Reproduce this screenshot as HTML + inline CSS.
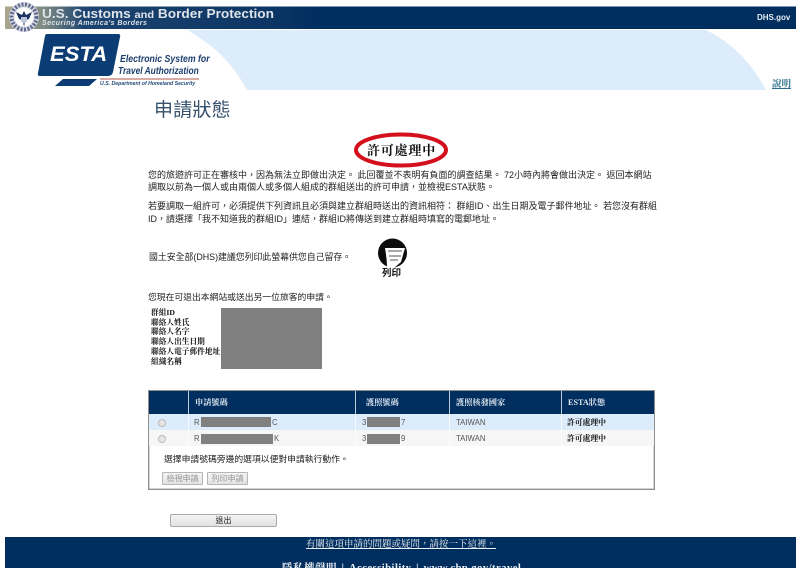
<!DOCTYPE html>
<html lang="zh-Hant"><head><meta charset="utf-8"><title>ESTA</title>
<style>
html,body{margin:0;padding:0;background:#fff;width:800px;height:568px;overflow:hidden}
body{position:relative;font-family:"Liberation Sans","Noto Sans CJK TC",sans-serif;color:#222}
div,a,span{position:absolute;white-space:nowrap}
svg{position:absolute;left:0;top:0}
.t{font-size:9px;line-height:12px;color:#222}
.b{font-family:"Liberation Serif","Noto Serif CJK SC",serif;font-weight:700;font-size:7.7px;line-height:9.7px;color:#111}
.h{font-family:"Liberation Serif","Noto Serif CJK SC",serif;font-weight:700;font-size:8.2px;color:#dfe8f0;top:398px;line-height:10px}
.c{font-size:7.8px;color:#555;line-height:10px}
.s{font-family:"Liberation Serif","Noto Serif CJK SC",serif;font-weight:700;font-size:7.8px;color:#111;left:567px;line-height:10px}
.g{background:#808080}
.btn{background:linear-gradient(#f4f4f4,#e2e2e2);border:1px solid #b5b5b5;border-radius:1px;font-size:8px;color:#999;text-align:center;box-sizing:border-box}
.r{width:6px;height:6px;border:1px solid #bbb;border-radius:50%;background:#e6e6e6;left:158px}
</style></head><body>
<svg width="800" height="568" viewBox="0 0 800 568">
<defs><linearGradient id="hd" x1="0" x2="1" y1="0" y2="0"><stop offset="0" stop-color="#a9a68e"/><stop offset=".05" stop-color="#7d8b83"/><stop offset=".1" stop-color="#1d4470"/><stop offset=".34" stop-color="#0b3564"/><stop offset=".4" stop-color="#002e5f"/><stop offset="1" stop-color="#002e5f"/></linearGradient></defs>
<path d="M187 30H706C734 44 752 64 766 90H247C232 62 212 44 187 30Z" fill="#dcecfb"/>
<rect x="5" y="6.500" width="791" height="22.500" fill="url(#hd)"/>
<circle cx="24" cy="17" r="15" fill="#d9d9e2"/>
<circle cx="24" cy="17" r="12.500" fill="none" stroke="#5f6a90" stroke-width="4" stroke-dasharray="2 1.500"/>
<circle cx="24" cy="17" r="9.500" fill="#fff"/>
<path d="M16 12L22 15L24 11L26 15L32 12L29 19L26 20L24 26L22 20L19 19Z" fill="#1d3160"/>
<path d="M21 17H27V21L24 24L21 21Z" fill="#b9c3d8"/>
<path d="M47 34H118Q121 34 120 37L113 72Q112 76 108 76H40Q37 76 38 73L45 36Q45.500 34 47 34Z" fill="#0b3c73"/>
<path d="M63 79H97L89 86H55Z" fill="#0b3c73"/>
<rect x="100" y="78.500" width="99" height="1" fill="#b0554d"/>
<ellipse cx="401" cy="150" rx="45" ry="15.500" fill="none" stroke="#d3101c" stroke-width="4"/>
<circle cx="392.500" cy="253" r="14.500" fill="#0c0c0c"/>
<path d="M385 248H405L401 262L394 268H387C387 261 386 254 385 248Z" fill="#fff"/>
<path d="M388 251H402M389 256H401M390 260H398" stroke="#555" stroke-width="1" fill="none"/>
</svg>

<div style="left:42px;top:6px;font-size:13px;font-weight:700;color:#dfe3ea;line-height:16px;transform-origin:0 0;transform:scaleX(1.05)">U.S. Customs <span style="position:static;font-size:10.500px">and</span> Border Protection</div>
<div style="left:42px;top:20px;font-size:7px;font-weight:700;font-style:italic;color:#dfe3ea;line-height:8px;letter-spacing:.45px">Securing America's Borders</div>
<div style="left:757px;top:13px;font-size:8px;font-weight:700;color:#e6ecf2;line-height:10px">DHS.gov</div>

<div style="left:50px;top:43px;font-size:21px;font-weight:700;font-style:italic;color:#fff;line-height:24px;transform-origin:0 0;transform:scaleX(1.05)">ESTA</div>
<div style="left:120px;top:53px;font-size:10.500px;font-style:italic;color:#1d3f6e;line-height:12px;font-weight:700;transform-origin:0 0;transform:scaleX(.83)">Electronic System for</div>
<div style="left:118px;top:65px;font-size:10.500px;font-style:italic;color:#1d3f6e;line-height:12px;font-weight:700;transform-origin:0 0;transform:scaleX(.8)">Travel Authorization</div>
<div style="left:100px;top:81px;font-size:5.200px;font-style:italic;font-weight:700;color:#264a78;line-height:7px">U.S. Department of Homeland Security</div>

<a style="left:772px;top:79px;font-size:9.500px;font-weight:700;color:#2b6f8c;text-decoration:underline;line-height:12px;font-family:'Liberation Serif','Noto Serif CJK SC',serif">說明</a>

<div style="left:154px;top:97px;font-size:19px;line-height:24px;color:#37516d;font-family:'Noto Sans CJK TC',sans-serif;letter-spacing:.2px">申請狀態</div>
<div style="left:367px;top:143px;font-size:13px;line-height:16px;font-weight:700;color:#111;font-family:'Liberation Serif','Noto Serif CJK SC',serif;letter-spacing:.8px">許可處理中</div>

<div class="t" style="left:148px;top:169px">您的旅遊許可正在審核中，因為無法立即做出決定。 此回覆並不表明有負面的調查結果。 72小時內將會做出決定。 返回本網站</div>
<div class="t" style="left:148px;top:181px">調取以前為一個人或由兩個人或多個人組成的群組送出的許可申請，並檢視ESTA狀態。</div>
<div class="t" style="left:148px;top:200px">若要調取一組許可，必須提供下列資訊且必須與建立群組時送出的資訊相符： 群組ID、出生日期及電子郵件地址。 若您沒有群組</div>
<div class="t" style="left:148px;top:213px">ID，請選擇「我不知道我的群組ID」連結，群組ID將傳送到建立群組時填寫的電郵地址。</div>
<div class="t" style="left:149px;top:251px;font-size:8.900px">國土安全部(DHS)建議您列印此螢幕供您自己留存。</div>
<div style="left:382px;top:268px;font-size:9.500px;font-weight:700;color:#111;line-height:12px">列印</div>
<div class="t" style="left:148px;top:291px;font-size:8.800px">您現在可退出本網站或送出另一位旅客的申請。</div>

<div class="b" style="left:151px;top:308px">群組ID<br>聯絡人姓氏<br>聯絡人名字<br>聯絡人出生日期<br>聯絡人電子郵件地址<br>組織名稱</div>
<div class="g" style="left:221px;top:308px;width:101px;height:61px"></div>

<div style="left:148px;top:390px;width:507px;height:100px;border:1px solid #8f8f8f;box-shadow:inset 0 0 0 .5px #aaa;box-sizing:border-box"></div>
<div style="left:149px;top:391px;width:505px;height:23px;background:#002e5f"></div>
<div style="left:149px;top:414px;width:505px;height:16px;background:#dcecfb"></div>
<div style="left:149px;top:430px;width:505px;height:16px;background:#f6f6f6"></div>
<div style="left:188px;top:391px;width:1px;height:55px;background:#fff;opacity:.75"></div>
<div style="left:355px;top:391px;width:1px;height:55px;background:#fff;opacity:.75"></div>
<div style="left:449px;top:391px;width:1px;height:55px;background:#fff;opacity:.75"></div>
<div style="left:561px;top:391px;width:1px;height:55px;background:#fff;opacity:.75"></div>

<div class="h" style="left:195px">申請號碼</div>
<div class="h" style="left:366px">護照號碼</div>
<div class="h" style="left:456px">護照核發國家</div>
<div class="h" style="left:568px">ESTA狀態</div>

<div class="r" style="top:419px"></div>
<div class="r" style="top:435px"></div>
<div class="c" style="left:194px;top:418px">R</div>
<div class="g" style="left:201px;top:417px;width:70px;height:10px"></div>
<div class="c" style="left:272px;top:418px">C</div>
<div class="c" style="left:362px;top:418px">3</div>
<div class="g" style="left:367px;top:417px;width:33px;height:10px"></div>
<div class="c" style="left:401px;top:418px">7</div>
<div class="c" style="left:456px;top:418px">TAIWAN</div>
<div class="s" style="top:418px">許可處理中</div>

<div class="c" style="left:194px;top:434px">R</div>
<div class="g" style="left:201px;top:434px;width:72px;height:10px"></div>
<div class="c" style="left:274px;top:434px">K</div>
<div class="c" style="left:362px;top:434px">3</div>
<div class="g" style="left:367px;top:434px;width:33px;height:10px"></div>
<div class="c" style="left:401px;top:434px">9</div>
<div class="c" style="left:456px;top:434px">TAIWAN</div>
<div class="s" style="top:434px">許可處理中</div>

<div class="t" style="left:164px;top:453px;font-size:8.800px">選擇申請號碼旁邊的選項以便對申請執行動作。</div>
<div class="btn" style="left:162px;top:472px;width:41px;height:13px;line-height:12px">檢視申請</div>
<div class="btn" style="left:207px;top:472px;width:41px;height:13px;line-height:12px">列印申請</div>

<div class="btn" style="left:170px;top:514px;width:107px;height:13px;line-height:12px;color:#222;border-color:#aaa;border-radius:2px">退出</div>

<div style="left:5px;top:537px;width:791px;height:31px;background:#002e5f;overflow:hidden">
<a style="left:301px;top:2px;font-size:9.500px;line-height:12px;color:#eef2f6;text-decoration:underline;font-family:'Liberation Serif','Noto Serif CJK SC',serif">有關這項申請的問題或疑問，請按一下這裡。</a>
<div style="left:277px;top:26px;font-size:10.500px;line-height:12px;color:#eef2f6;font-weight:700;letter-spacing:.5px;word-spacing:1.5px;font-family:'Liberation Serif','Noto Serif CJK SC',serif">隱私權聲明 | Accessibility | www.cbp.gov/travel</div>
</div>
</body></html>
